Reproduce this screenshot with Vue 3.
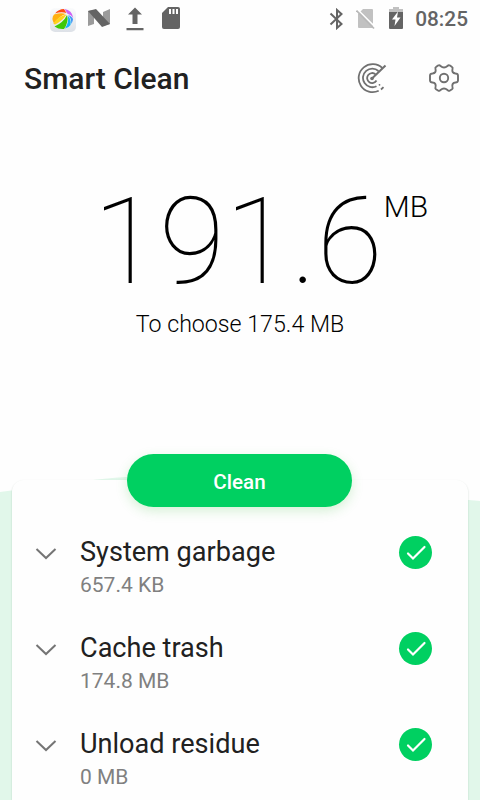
<template>
    <div class="screen">
        <div class="status-bar">
            <div class="status-left">
                <svg class="app-icon" width="26" height="24" viewBox="0 0 26 24">
                    <defs>
                        <linearGradient id="tile" x1="0" y1="0" x2="0" y2="1">
                            <stop offset="0" stop-color="#fafbfc" />
                            <stop offset="1" stop-color="#dde1e7" />
                        </linearGradient>
                    </defs>
                    <rect width="26" height="24" rx="5" fill="url(#tile)" />
                    <path fill="#ff4a10" d="M5 5.500Q8.500 1 14 1L16.500 5Q11 3.500 5 5.500Z" />
                    <path fill="#ffb010" d="M4 6.500Q11 4.500 16 6Q9 8 4 15.500Q1 10 4 6.500Z" />
                    <path fill="#ffd21c" d="M16.500 6.500Q12.500 13 5 16.500Q3.500 16 3.500 15.500Q8 8 16.500 6.500Z" />
                    <path fill="#3fc808" d="M17 7Q19 14 14 21Q8.500 21.500 4.500 18.500Q13.500 14.500 17 7Z" />
                    <path fill="#16b4f5" d="M17.500 7.500Q21.500 10.500 20.500 17Q18.500 20 15 20.500Q19.500 14 17.500 7.500Z" />
                    <path fill="#3c96f5" d="M18 7Q22.500 8.500 23 11.500Q22.500 14 21.300 16Q21.500 10 18 7Z" />
                    <path fill="#cf63f5" d="M14.500 1Q22 2 23.300 10Q21 6.800 17.500 5.800Z" />
                </svg>
                <svg class="nougat-icon" width="24" height="20" viewBox="0 0 24 20">
                    <path fill="#9b9b9b" d="M1 3L7 2V16L1 18ZM16 4L23 1V16L16 18Z" />
                    <path fill="#646464" d="M1 3L9 1L23 16L15 19Z" />
                </svg>
                <svg class="upload-icon" width="18" height="24" viewBox="0 0 18 24">
                    <path fill="#646464" d="M9 0.500L16 7.500H11.500V17H6.500V7.500H2ZM0.500 21H17.500V23.300H0.500Z" />
                </svg>
                <svg class="sd-icon" width="18" height="22" viewBox="0 0 18 22">
                    <path fill="#646464" d="M6 0H16Q18 0 18 2V20Q18 22 16 22H2Q0 22 0 20V6Z" />
                    <path stroke="#fff" stroke-width="2" d="M8 2V7M11.500 2V7M15 2V7" />
                </svg>
            </div>
            <div class="status-right">
                <svg class="bluetooth-icon" width="15" height="22" viewBox="0 0 15 22">
                    <path fill="none" stroke="#646464" stroke-width="2"
                        d="M1.500 5.500L12.500 16L8 20V2L12.500 6L1.500 16.500" />
                </svg>
                <svg class="sim-icon" width="19" height="21" viewBox="0 0 19 21">
                    <path fill="#c1c1c1" d="M7 0H16Q17 0 17 1V19H3Q2 19 2 18V5Z" />
                    <path stroke="#fff" stroke-width="1.600" d="M1.500 0.500L19 18" />
                    <path stroke="#b8b8b8" stroke-width="1.700" d="M0.500 1.500L18 19.500" />
                </svg>
                <svg class="battery-icon" width="14" height="22" viewBox="0 0 14 22">
                    <path fill="#c1c1c1" d="M4 0H10V2H14V6H0V2H4Z" />
                    <path fill="#646464" d="M0 5H14V21Q14 22 13 22H1Q0 22 0 21Z" />
                    <path fill="#fff" d="M9 4.500L8 10.500H11.500L5.500 19L6.500 12.500H3Z" />
                </svg>
                <span class="clock">08:25</span>
            </div>
        </div>

        <div class="title-bar">
            <h1>Smart Clean</h1>
            <button class="icon-btn" aria-label="Scan">
                <svg width="32" height="32" viewBox="0 0 32 32" fill="none" stroke="#707070" stroke-width="1.800">
                    <path
                        d="M26.300 6A14 14 0 1 0 22.700 28.800M22.500 9A9.300 9.300 0 1 0 20.500 24.200M19.500 12.300A5 5 0 1 0 20.500 18.500" />
                    <path stroke-width="2" d="M16 16.500L29.500 3.500" />
                    <circle cx="16" cy="16.500" r="1.800" fill="#707070" stroke="none" />
                    <circle cx="23.500" cy="22.800" r="0.900" fill="#707070" stroke="none" />
                    <path d="M25 27.500L27.500 25.200" />
                </svg>
            </button>
            <button class="icon-btn" aria-label="Settings">
                <svg width="32" height="32" viewBox="0 0 32 32" fill="none" stroke="#707070" stroke-width="1.900"
                    stroke-linejoin="round">
                    <path
                        d="M10 3.500Q11.500 2.600 12.500 4Q16 7 19.500 4Q20.500 2.600 22 3.500L24 5Q25 5.700 24.500 7Q23.500 11 27.500 11.500Q29.800 11.500 30 13.500V18.500Q29.800 20.500 27.500 20.500Q23.500 21 24.500 25Q25 26.500 24 27.200L22 28.500Q20.500 29.500 19.500 28Q16 25 12.500 28Q11.500 29.500 10 28.500L8 27.200Q7 26.500 7.500 25Q8.500 21 4.500 20.500Q2.200 20.500 2 18.500V13.500Q2.200 11.500 4.500 11.500Q8.500 11 7.500 7Q7 5.700 8 5Z" />
                    <circle cx="16" cy="16" r="4.200" />
                </svg>
            </button>
        </div>

        <div class="summary">
            <div class="amount">
                <span class="number">191.6</span>
                <span class="unit">MB</span>
            </div>
            <p class="chosen">To choose 175.4 MB</p>
        </div>

        <div class="results">
            <svg class="wave" width="480" height="330" viewBox="0 0 480 330">
                <path fill="#e1f7ea" d="M0 22Q45 16 86 11Q120 6 180 5Q300 5 380 18Q430 27 480 31V330H0Z" />
            </svg>
            <button class="clean-btn">Clean</button>
            <div class="card">
                <div v-for="item in items" :key="item.name" class="row" @click="item.checked = !item.checked">
                    <svg class="chevron" width="22" height="14" viewBox="0 0 22 14">
                        <path fill="none" stroke="#757575" stroke-width="2" d="M1.500 2L11 11L20.500 2" />
                    </svg>
                    <div class="row-text">
                        <span class="name">{{ item.name }}</span>
                        <span class="size">{{ item.size }}</span>
                    </div>
                    <svg class="check" width="34" height="34" viewBox="0 0 34 34">
                        <circle cx="17.500" cy="17.500" r="16.500" :fill="item.checked ? '#00d061' : '#d0d0d0'" />
                        <path fill="none" stroke="#fff" stroke-width="2.200" stroke-linecap="round"
                            d="M10 18.500L15 23.500L26.500 12" />
                    </svg>
                </div>
            </div>
        </div>
    </div>
</template>

<script setup>
import { ref } from 'vue'

const items = ref([
    { name: 'System garbage', size: '657.4 KB', checked: true },
    { name: 'Cache trash', size: '174.8 MB', checked: true },
    { name: 'Unload residue', size: '0 MB', checked: true }
])
</script>

<style>
body {
    margin: 0;
    background-color: #fefefe;
}
</style>

<style scoped>
.screen {
    display: flex;
    flex-direction: column;
    width: 480px;
    height: 800px;
    overflow: hidden;
    background-color: #fefefe;
    color: #212121;
    font-family: Roboto, sans-serif;
}

button {
    border: none;
    padding: 0;
    background: none;
    font-family: inherit;
    cursor: pointer;
}

svg {
    display: block;
    flex-shrink: 0;
}

.status-bar {
    display: flex;
    justify-content: space-between;
    align-items: center;
    box-sizing: border-box;
    height: 38px;
    padding: 0 12px 0 50px;
}

.status-left,
.status-right {
    display: flex;
    align-items: center;
}

.status-right {
    height: 36px;
}

.app-icon {
    margin-top: 1px;
}

.nougat-icon {
    margin-left: 11px;
    margin-bottom: 2px;
}

.upload-icon {
    margin-left: 15px;
    margin-bottom: 1px;
}

.sd-icon {
    margin-left: 18px;
    margin-bottom: 2px;
}

.sim-icon {
    margin-left: 12px;
}

.battery-icon {
    margin-left: 14px;
    margin-bottom: 2px;
}

.clock {
    margin-left: 12px;
    font-size: 20.8px;
    font-weight: 500;
    color: #646464;
}

.title-bar {
    display: flex;
    align-items: center;
    height: 80px;
    padding: 0 20px 0 24px;

    h1 {
        margin: 0 auto 0 0;
        font-size: 30px;
        font-weight: 500;
    }

    .icon-btn + .icon-btn {
        margin-left: 40px;
    }
}

.summary {
    height: 350px;
    color: #000;
}

.amount {
    display: flex;
    align-items: flex-start;
    padding: 51px 0 0 93px;
}

.number {
    margin-top: 1px;
    font-size: 120.5px;
    font-weight: 100;
    line-height: 143px;
}

.unit {
    margin: 20px 0 0 1px;
    font-size: 30px;
    font-weight: 300;
    line-height: 36px;
}

.chosen {
    margin: -3px 0 0;
    text-align: center;
    font-size: 23.200px;
    font-weight: 300;
    line-height: 28px;
}

.results {
    position: relative;
    display: grid;
    grid-template-rows: 12px 320px;
}

.wave {
    position: absolute;
    left: 0;
    top: 2px;
}

.clean-btn {
    position: absolute;
    z-index: 1;
    left: 127px;
    top: -14px;
    width: 225px;
    height: 53px;
    padding-top: 2px;
    border-radius: 27px;
    background-color: #00d061;
    color: #fff;
    font-size: 20.6px;
    font-weight: 500;
    box-shadow: 0 4px 12px rgba(70, 190, 70, 0.22);
}

.card {
    position: relative;
    grid-row: 2;
    box-sizing: border-box;
    margin: 0 12px;
    padding-top: 36px;
    border-radius: 12px 12px 0 0;
    background-color: #fefefe;
    box-shadow: 0 1px 2px rgba(0, 60, 30, 0.2);
}

.row {
    display: flex;
    align-items: flex-start;
    height: 96px;
    padding: 0 36px 0 23px;
    cursor: pointer;
}

.chevron {
    margin-top: 31px;
}

.row-text {
    display: flex;
    flex-direction: column;
    margin: 20px auto 0 23px;
}

.name {
    font-size: 27.1px;
    line-height: 32px;
}

.size {
    margin-top: 3px;
    font-size: 21px;
    line-height: 28px;
    color: #808080;
}

.check {
    margin-top: 19px;
}
</style>
